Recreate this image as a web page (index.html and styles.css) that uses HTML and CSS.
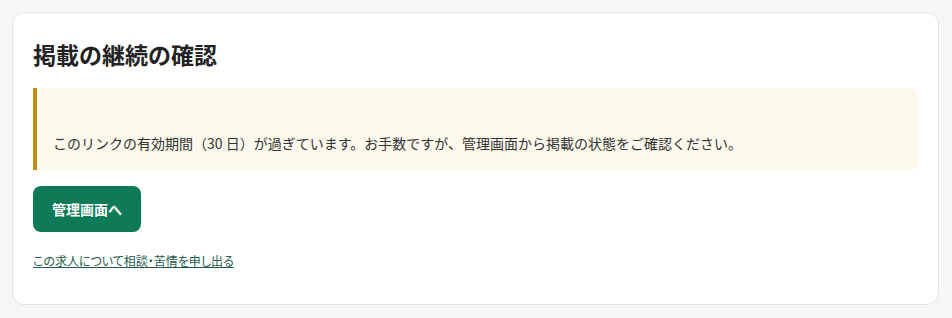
FILE: index.html
```html
<!DOCTYPE html>
<html lang="ja">
<head>
<meta charset="utf-8">
<link rel="stylesheet" href="styles.css">
</head>
<body>
<main class="card">
  <h1 class="title">掲載の継続の確認</h1>
  <div class="notice">
    <p class="notice-text">このリンクの有効期間（30 日）が過ぎています。お手数ですが、管理画面から掲載の状態をご確認ください。</p>
  </div>
  <a class="btn" href="#">管理画面へ</a>
  <a class="report" href="#">この求人について相談・苦情を申し出る</a>
</main>
</body>
</html>
```

FILE: styles.css
```css
html, body { margin: 0; padding: 0; }
body {
  background: #f5f6f6;
  padding: 12px 13px 13px 12px;
  font-family: "Noto Sans CJK JP", "Noto Sans", sans-serif;
  color: #2b2b2b;
}
.card {
  background: #fff;
  border: 1px solid #e1e3e3;
  border-radius: 12px;
  padding: 22px 20px 22px 20px;
  height: 293px;
  box-sizing: border-box;
  display: flex;
  flex-direction: column;
  align-items: flex-start;
}
.title {
  margin: 0;
  font-size: 23px;
  line-height: 38px;
  font-weight: 700;
  color: #222;
}
.notice {
  align-self: stretch;
  margin-top: 15px;
  background: #fcf8ec;
  border-left: 4px solid #c08f12;
  border-radius: 0 8px 8px 0;
  padding: 44px 16px 16px 16px;
}
.notice-text {
  margin: 0;
  font-size: 14px;
  line-height: 22px;
  color: #333;
}
.btn {
  margin-top: 16px;
  background: #0f7a58;
  color: #fff;
  text-decoration: none;
  font-weight: 700;
  font-size: 14px;
  line-height: 20px;
  padding: 13px 19px;
  border-radius: 8px;
}
.report {
  margin-top: 20px;
  font-size: 12px;
  line-height: 18px;
  color: #1d5c4c;
  text-decoration: underline;
  font-feature-settings: "palt";
}
```
